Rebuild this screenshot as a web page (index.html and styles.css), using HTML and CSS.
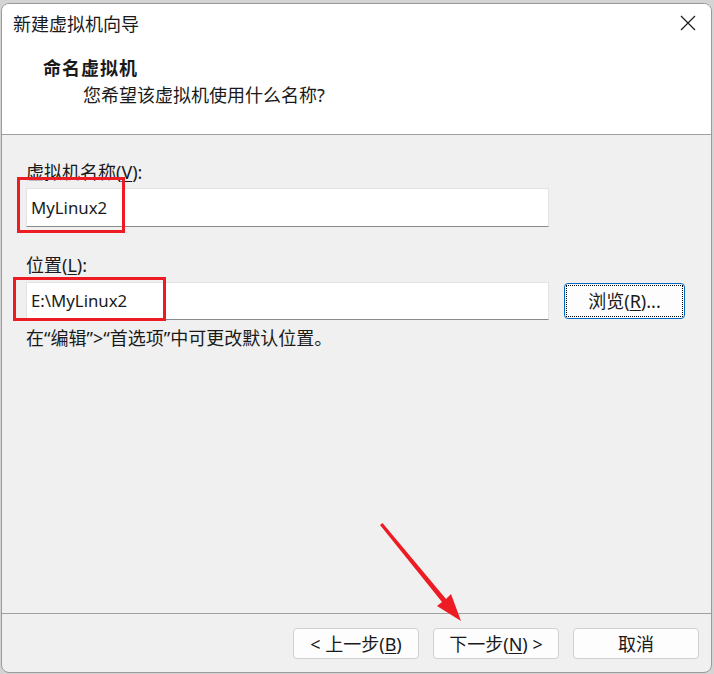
FILE: index.html
```html
<!DOCTYPE html>
<html lang="zh-CN">
<head>
<meta charset="utf-8">
<title>新建虚拟机向导</title>
<link rel="stylesheet" href="styles.css">
</head>
<body>
<div class="window">
  <div class="titlebar">
    <span class="title">新建虚拟机向导</span>
    <svg class="close" width="16" height="16" viewBox="0 0 16 16"><path d="M1 1 L15 15 M15 1 L1 15" stroke="#1a1a1a" stroke-width="1.2" fill="none"/></svg>
  </div>
  <div class="header">
    <div class="heading">命名虚拟机</div>
    <div class="subheading">您希望该虚拟机使用什么名称?</div>
  </div>
  <div class="content">
    <div class="label">虚拟机名称(<u>V</u>):</div>
    <div class="row">
      <div class="field">MyLinux2</div>
    </div>
    <div class="label label-loc">位置(<u>L</u>):</div>
    <div class="row">
      <div class="field field-loc">E:\MyLinux2</div>
      <div class="btn browse"><span class="focus">浏览(<u>R</u>)...</span></div>
    </div>
    <div class="hint">在“编辑”&gt;“首选项”中可更改默认位置。</div>
  </div>
  <div class="footer">
    <div class="btn">&lt; 上一步(<u>B</u>)</div>
    <div class="btn">下一步(<u>N</u>) &gt;</div>
    <div class="btn">取消</div>
  </div>
</div>
<div class="mark mark-name"></div>
<div class="mark mark-loc"></div>
<svg class="arrow" width="714" height="674" viewBox="0 0 714 674">
  <polygon points="380,525 382.5,523 446,599 451,594 461,621 437,606 442,602" fill="#ed1c24"/>
</svg>
</body>
</html>
```
FILE: styles.css
```css
html, body {
  margin: 0;
  padding: 0;
}
body {
  width: 714px;
  height: 674px;
  box-sizing: border-box;
  padding: 3px 2px 1px 1px;
  background: #d4d4d4;
  font-family: "Noto Sans", "Noto Sans CJK SC", sans-serif;
  color: #1a1a1a;
  position: relative;
  overflow: hidden;
}
.window {
  width: 711px;
  height: 670px;
  box-sizing: border-box;
  border: 1px solid #9a9a9a;
  border-radius: 8px;
  overflow: hidden;
  display: flex;
  flex-direction: column;
  background: #f0f0f0;
}
.titlebar {
  height: 38px;
  flex: none;
  background: #fff;
  display: flex;
  align-items: center;
  justify-content: space-between;
  padding: 0 15px 0 11px;
}
.title {
  font-size: 18px;
  line-height: 24px;
  font-family: "Noto Sans CJK SC", sans-serif;
}
.close {
  display: block;
}
.header {
  height: 92px;
  flex: none;
  background: #fff;
  border-bottom: 1px solid #a0a0a0;
  box-sizing: content-box;
  padding-left: 41px;
}
.heading {
  margin-top: 13px;
  font-size: 18px;
  line-height: 24px;
  font-weight: bold;
  letter-spacing: 1px;
  font-family: "Noto Sans CJK SC", sans-serif;
}
.subheading {
  margin-top: 4px;
  margin-left: 40px;
  font-size: 18px;
  line-height: 24px;
}
.content {
  flex: 1;
  padding: 25px 0 0 24px;
}
.label {
  font-size: 18px;
  line-height: 24px;
  margin-bottom: 4px;
}
.label u, .btn u {
  text-underline-offset: 2px;
}
.label-loc {
  margin-top: 26px;
  margin-bottom: 5px;
}
.row {
  display: flex;
  align-items: center;
}
.field {
  width: 523px;
  height: 39px;
  box-sizing: border-box;
  background: #fff;
  border: 1px solid #e3e3e3;
  border-bottom: 1px solid #8a8a8a;
  font-size: 16.8px;
  line-height: 37px;
  padding-left: 4px;
}
.field-loc {
  height: 38px;
  line-height: 36px;
}
.btn {
  height: 31px;
  box-sizing: border-box;
  border: 1px solid #d0d0d0;
  border-radius: 4px;
  background: #fdfdfd;
  display: flex;
  align-items: center;
  justify-content: center;
  font-size: 18px;
  line-height: 24px;
  width: 126px;
}
.browse {
  margin-left: 15px;
  width: 121px;
  height: 36px;
  border: 1px solid #0067c0;
  padding: 1px;
}
.focus {
  flex: 1;
  align-self: stretch;
  border: 1px dotted #000;
  display: flex;
  align-items: center;
  justify-content: center;
}
.hint {
  margin-top: 6px;
  font-size: 18px;
  line-height: 24px;
}
.footer {
  height: 58px;
  flex: none;
  border-top: 1px solid #a0a0a0;
  box-sizing: content-box;
  display: flex;
  justify-content: flex-end;
  align-items: flex-start;
  gap: 14px;
  padding: 0 12px 0 0;
}
.footer .btn {
  margin-top: 14px;
}
.mark {
  position: absolute;
  border: 3px solid #ed1c24;
  box-sizing: border-box;
}
.mark-name {
  left: 17px;
  top: 177px;
  width: 108px;
  height: 56px;
}
.mark-loc {
  left: 13px;
  top: 277px;
  width: 153px;
  height: 44px;
}
.arrow {
  position: absolute;
  left: 0;
  top: 0;
  pointer-events: none;
}
```
